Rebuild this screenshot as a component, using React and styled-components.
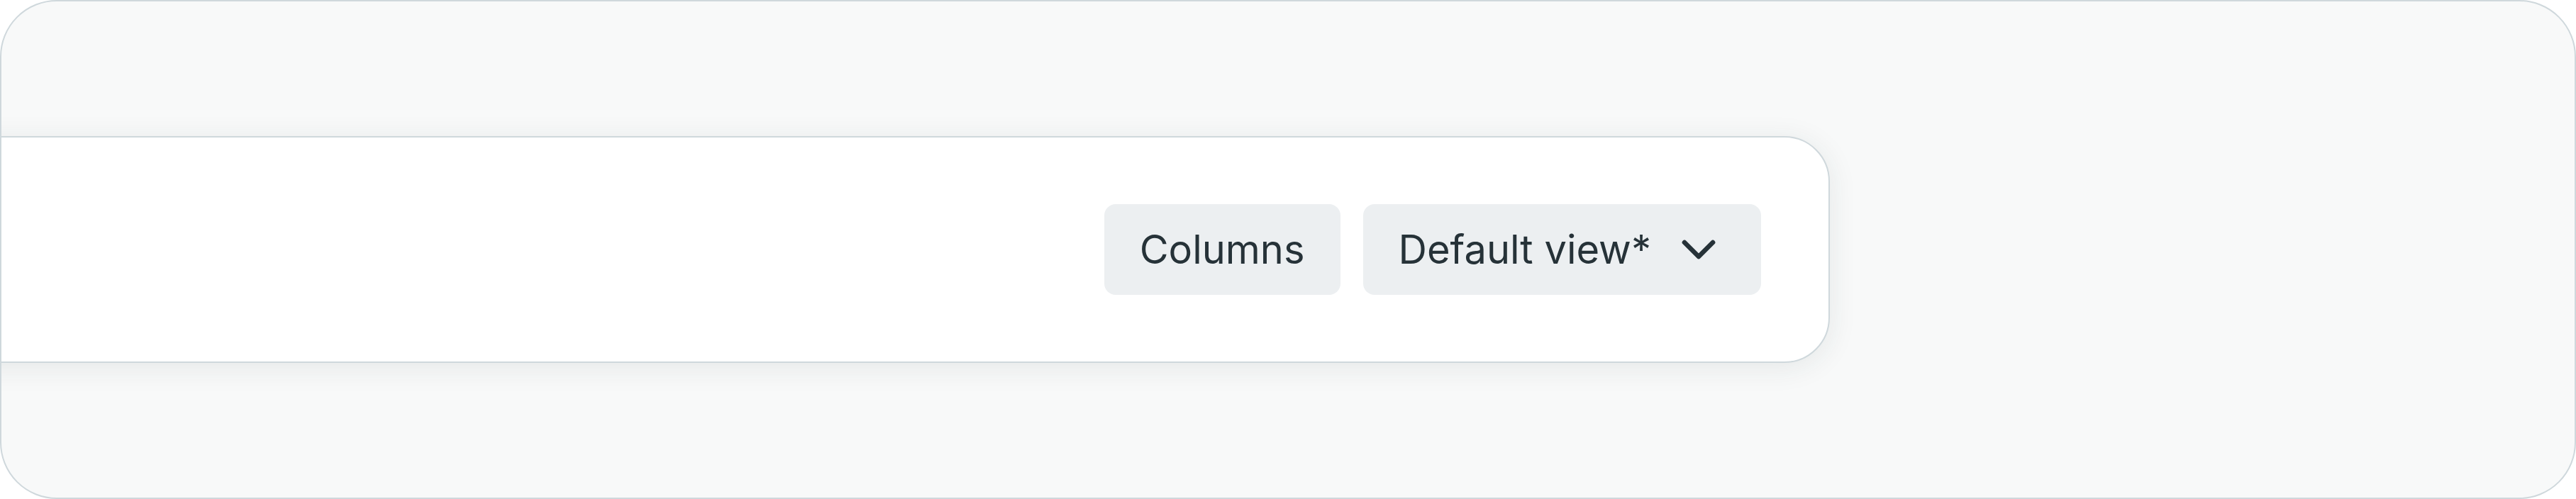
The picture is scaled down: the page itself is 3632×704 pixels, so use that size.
import React from "react";
import styled, { createGlobalStyle } from "styled-components";
import { ChevronDown } from "lucide-react";

const GlobalStyle = createGlobalStyle`
  html, body {
    margin: 0;
    padding: 0;
    background: #ffffff;
  }
  * {
    box-sizing: border-box;
  }
`;

const Frame = styled.div`
  width: 100vw;
  height: 704px;
  display: flex;
  align-items: center;
  background: #f8f9f9;
  border: 2px solid #cfd8dc;
  border-radius: 80px;
  overflow: hidden;
  font-family: Inter, "Noto Sans", sans-serif;
`;

const Toolbar = styled.div`
  flex: none;
  margin-left: -82px;
  width: 2660px;
  height: 320px;
  display: flex;
  align-items: center;
  justify-content: flex-end;
  gap: 32px;
  padding-right: 95px;
  background: #ffffff;
  border: 2px solid #cfd8dc;
  border-radius: 64px;
  box-shadow: 0 6px 40px rgba(38, 50, 56, 0.09);
`;

const Button = styled.button`
  height: 128px;
  display: flex;
  align-items: center;
  gap: ${(p) => (p.$withIcon ? "27px" : "0")};
  padding: 0 ${(p) => (p.$withIcon ? "48px" : "50px")} 0 50px;
  border: none;
  border-radius: 16px;
  background: #eceff1;
  color: #263238;
  font-family: Inter, "Noto Sans", sans-serif;
  font-size: 56px;
  font-weight: 400;
  line-height: 1;
  cursor: pointer;
`;

export default function App() {
  return (
    <>
      <GlobalStyle />
      <Frame>
        <Toolbar>
          <Button>Columns</Button>
          <Button $withIcon>
            Default view*
            <ChevronDown size={80} strokeWidth={2} color="#263238" />
          </Button>
        </Toolbar>
      </Frame>
    </>
  );
}
